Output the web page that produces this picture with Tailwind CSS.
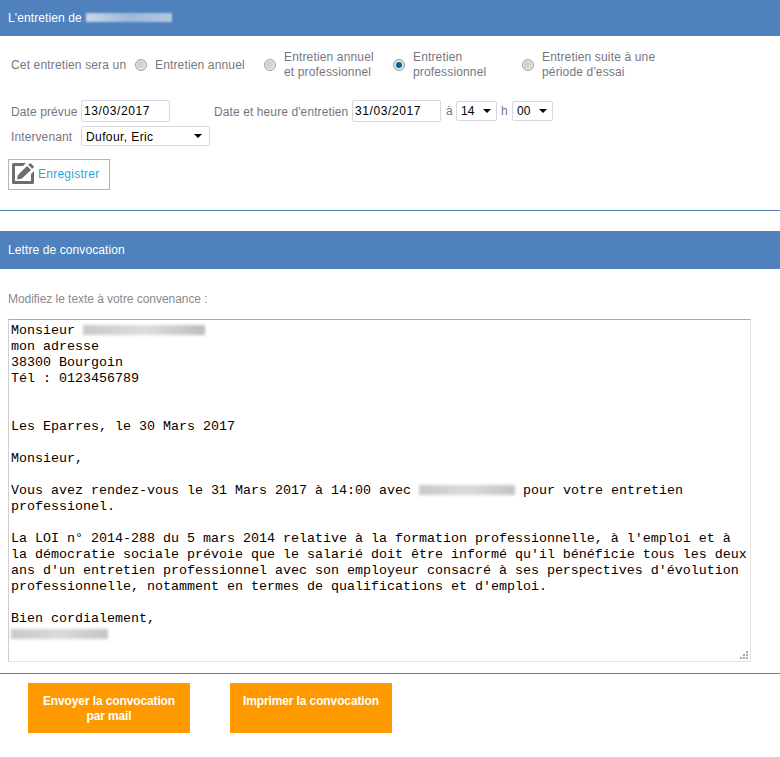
<!doctype html>
<html lang="fr">
<head>
<meta charset="utf-8">
<title>Entretien</title>
<script src="https://cdn.jsdelivr.net/npm/@tailwindcss/browser@4"></script>
</head>
<body class="bg-white">
<div class="w-[780px] h-[757px] overflow-hidden font-['Liberation_Sans',Arial,sans-serif] text-[12px] text-[#77767f]">

  <header class="h-[36px] bg-[#4f81bd] pl-[8px] flex items-center text-white tracking-[0.1px] pb-[1px]">
    <span>L'entretien de</span>
    <span class="ml-[4px] w-[86px] h-[9px] bg-gradient-to-r from-[#c9d8ea] via-[#9db8d8] to-[#b5c9e1] blur-[1px]"></span>
  </header>

  <section class="mt-[14px] h-[30px] pl-[11px] flex items-center tracking-[0.15px] leading-[15px]">
    <span class="w-[124px]">Cet entretien sera un</span>
    <span class="w-[12px] h-[12px] rounded-full border border-[#a0a0a0] bg-gradient-to-br from-[#c4c4c4] to-[#e4e4e4] shadow-[inset_0_0_0_1px_#efefef]"></span>
    <span class="ml-[8px] w-[109px]">Entretien annuel</span>
    <span class="w-[12px] h-[12px] rounded-full border border-[#a0a0a0] bg-gradient-to-br from-[#c4c4c4] to-[#e4e4e4] shadow-[inset_0_0_0_1px_#efefef]"></span>
    <span class="ml-[8px] w-[109px]">Entretien annuel<br>et professionnel</span>
    <span class="w-[12px] h-[12px] rounded-full border border-[#8a9aa8] bg-[#dfe6ea] flex items-center justify-center"><span class="w-[6px] h-[6px] rounded-full bg-[#0f5f94]"></span></span>
    <span class="ml-[8px] w-[109px]">Entretien<br>professionnel</span>
    <span class="w-[12px] h-[12px] rounded-full border border-[#a0a0a0] bg-gradient-to-br from-[#c4c4c4] to-[#e4e4e4] shadow-[inset_0_0_0_1px_#efefef]"></span>
    <span class="ml-[8px]">Entretien suite à une<br>période d'essai</span>
  </section>

  <section class="pl-[11px] mt-[20px]">
    <div class="flex items-center h-[22px] tracking-[0.1px]">
      <label class="w-[70px] pt-[2px]">Date prévue</label>
      <input value="13/03/2017" class="w-[89px] h-[22px] border border-[#d8d8e0] rounded-[2px] pl-[2px] text-black text-[12px] tracking-[0.6px]">
      <label class="ml-[44px] w-[138px] pt-[2px] whitespace-nowrap tracking-[0.1px]">Date et heure d'entretien</label>
      <input value="31/03/2017" class="w-[89px] h-[22px] border border-[#d8d8e0] rounded-[2px] pl-[2px] text-black text-[12px] tracking-[0.6px]">
      <span class="ml-[5px] w-[10px]">à</span>
      <div class="relative w-[41px] h-[20px] border border-[#d8d8e0] rounded-[2px] pl-[4px] flex items-center text-black">14
        <span class="absolute right-[5px] top-[7px] border-x-[4px] border-x-transparent border-t-[4px] border-t-black"></span>
      </div>
      <span class="ml-[4px] w-[11px]">h</span>
      <div class="relative w-[41px] h-[20px] border border-[#d8d8e0] rounded-[2px] pl-[4px] flex items-center text-black">00
        <span class="absolute right-[5px] top-[7px] border-x-[4px] border-x-transparent border-t-[4px] border-t-black"></span>
      </div>
    </div>
    <div class="flex items-center h-[20px] mt-[4px] tracking-[0.1px]">
      <label class="w-[70px] pt-[1px]">Intervenant</label>
      <div class="relative w-[129px] h-[20px] border border-[#d8d8e0] rounded-[2px] pl-[4px] pt-[1px] flex items-center text-black tracking-[0.4px]">Dufour, Eric
        <span class="absolute right-[7px] top-[7px] border-x-[4px] border-x-transparent border-t-[4px] border-t-black"></span>
      </div>
    </div>
  </section>

  <button class="ml-[8px] mt-[13px] w-[102px] h-[31px] border border-[#b5b5b5] flex items-center pl-[3px] pb-[1px] gap-[4px] text-[#1fa9dc] tracking-[0.25px]">
    <svg class="w-[22px] h-[22px]" viewBox="0 0 22 22" fill="#6e6e6e">
      <path d="M14 0H1.500A1.500 1.500 0 0 0 0 1.500V19.500A1.500 1.500 0 0 0 1.500 21H20.500A1.500 1.500 0 0 0 22 19.500V8l-3 3V18H3V3H11Z"/>
      <path d="M5 16.500L6 12 15 3 19 7 10 15.500Z"/>
      <path d="M16.200 1.800l1.300-1.300a1 1 0 0 1 1.400 0l2.600 2.600a1 1 0 0 1 0 1.400l-1.300 1.300Z"/>
    </svg>
    <span>Enregistrer</span>
  </button>

  <hr class="mt-[20px] border-0 h-[1px] bg-[#4f81bd]">

  <header class="mt-[20px] h-[38px] bg-[#4f81bd] pl-[8px] flex items-center text-white tracking-[0.1px]">Lettre de convocation</header>

  <p class="ml-[8px] mt-[23px] h-[14px] leading-[14px] text-[#8a8a8a] tracking-[-0.05px]">Modifiez le texte à votre convenance :</p>

  <div class="relative ml-[8px] mt-[13px] w-[743px] h-[343px] border border-[#e3e3e6] border-t-[#a9a9a9] border-l-[#cfcfcf] pl-[2px] pt-[3px] font-['Liberation_Mono','Courier_New',monospace] text-[13.333px] leading-[16px] text-black whitespace-pre overflow-hidden">Monsieur <span class="inline-block align-middle w-[122px] h-[10px] bg-gradient-to-r from-[#c9c9c9] via-[#dedede] to-[#bdbdbd] blur-[1.5px]"></span>
mon adresse
38300 Bourgoin
Tél : 0123456789


Les Eparres, le 30 Mars 2017

Monsieur,

Vous avez rendez-vous le 31 Mars 2017 à 14:00 avec <span class="inline-block align-middle w-[96px] h-[10px] bg-gradient-to-r from-[#c9c9c9] via-[#dadada] to-[#c4c4c4] blur-[1.5px]"></span> pour votre entretien
professionel.

La LOI n° 2014-288 du 5 mars 2014 relative à la formation professionnelle, à l'emploi et à
la démocratie sociale prévoie que le salarié doit être informé qu'il bénéficie tous les deux
ans d'un entretien professionnel avec son employeur consacré à ses perspectives d'évolution
professionnelle, notamment en termes de qualifications et d'emploi.

Bien cordialement,
<span class="inline-block align-middle w-[97px] h-[10px] bg-gradient-to-r from-[#c9c9c9] via-[#dadada] to-[#c4c4c4] blur-[1.5px]"></span>
    <svg class="absolute right-[2px] bottom-[2px] w-[9px] h-[9px]" viewBox="0 0 9 9" fill="#a8a8a8"><rect x="7" y="1" width="2" height="2"/><rect x="4" y="4" width="2" height="2"/><rect x="7" y="4" width="2" height="2"/><rect x="1" y="7" width="2" height="2"/><rect x="4" y="7" width="2" height="2"/><rect x="7" y="7" width="2" height="2"/></svg>
  </div>

  <hr class="mt-[11px] border-0 h-[1px] bg-[#4f81bd]">

  <div class="flex gap-[40px] pl-[28px] mt-[9px]">
    <button class="w-[162px] h-[50px] bg-[#ff9900] text-white font-bold leading-[15px] pt-[11px] flex justify-center items-start text-center tracking-[-0.12px]">Envoyer la convocation<br>par mail</button>
    <button class="w-[162px] h-[50px] bg-[#ff9900] text-white font-bold leading-[15px] pt-[11px] flex justify-center items-start text-center tracking-[-0.12px]">Imprimer la convocation</button>
  </div>
</div>
</body>
</html>
